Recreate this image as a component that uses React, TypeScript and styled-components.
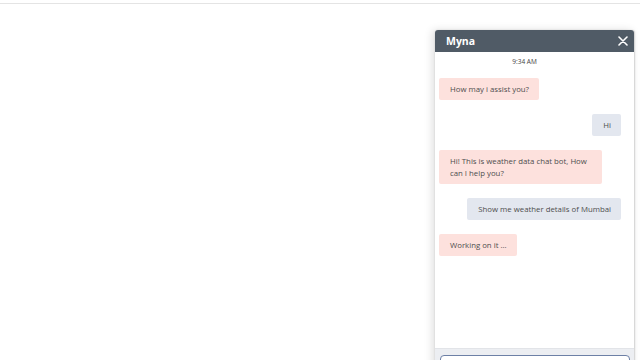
import React from "react";
import styled, { createGlobalStyle } from "styled-components";

const Global = createGlobalStyle`
  html, body { margin: 0; padding: 0; background: #fff; overflow: hidden; }
  body { font-family: "Open Sans", "Liberation Sans", sans-serif; width: 640px; height: 360px; }
`;

const Page = styled.div`
  width: 640px;
  height: 360px;
  display: flex;
  flex-direction: column;
`;

const TopBar = styled.div`
  height: 3px;
  border-bottom: 1px solid #e4e4e4;
  flex-shrink: 0;
`;

const Stage = styled.div`
  flex: 1;
  display: flex;
  justify-content: flex-end;
  padding: 26px 5px 0 0;
`;

const Panel = styled.div`
  width: 200px;
  height: 340px;
  box-sizing: border-box;
  flex-shrink: 0;
  display: flex;
  flex-direction: column;
  background: #fff;
  border-radius: 3px 3px 0 0;
  box-shadow: -3px 0 8px rgba(0, 0, 0, 0.12), 0 0 2px rgba(0, 0, 0, 0.12);
  border-right: 1px solid #d8d8d8;
`;

const Header = styled.div`
  height: 22px;
  background: #505b66;
  border-radius: 3px 3px 0 0;
  display: flex;
  align-items: center;
  justify-content: space-between;
  padding: 0 6px 0 11px;
  color: #fff;
  flex-shrink: 0;
`;

const Title = styled.span`
  font-size: 10.5px;
  font-weight: 700;
`;

const Close = styled.svg`
  width: 10px;
  height: 10px;
  display: block;
`;

const Messages = styled.div`
  height: 296px;
  flex-shrink: 0;
  display: flex;
  flex-direction: column;
  padding: 5px 13px 0 4px;
  box-sizing: border-box;
  gap: 14px;
`;

const Time = styled.div`
  font-size: 6.5px;
  line-height: 10px;
  color: #444;
  text-align: center;
  margin-bottom: -3px;
  padding-right: 11px;
`;

const Bubble = styled.div<{ $user?: boolean }>`
  align-self: ${(p) => (p.$user ? "flex-end" : "flex-start")};
  background: ${(p) => (p.$user ? "#e3e7ef" : "#fde1dd")};
  color: #4e4e4e;
  font-size: 7.8px;
  line-height: 12px;
  padding: 5px 10px 5px 11px;
  max-width: 142px;
  border-radius: 2px;
`;

const Footer = styled.div`
  flex: 1;
  background: #eceef2;
  border-top: 1px solid #e2e4e8;
  padding: 6px 4px 0 5px;
`;

const Input = styled.div`
  height: 30px;
  background: #fff;
  border: 1.5px solid #6d80a6;
  border-radius: 4px;
`;

export default function App() {
  return (
    <Page>
      <Global />
      <TopBar />
      <Stage>
        <Panel>
          <Header>
            <Title>Myna</Title>
            <Close viewBox="0 0 10 10">
              <path d="M1 1 L9 9 M9 1 L1 9" stroke="#fff" strokeWidth="1.6" strokeLinecap="round" />
            </Close>
          </Header>
          <Messages>
            <Time>9:34 AM</Time>
            <Bubble>How may i assist you?</Bubble>
            <Bubble $user>Hi</Bubble>
            <Bubble>Hi! This is weather data chat bot, How can I help you?</Bubble>
            <Bubble $user>Show me weather details of Mumbai</Bubble>
            <Bubble>Working on it ...</Bubble>
          </Messages>
          <Footer>
            <Input />
          </Footer>
        </Panel>
      </Stage>
    </Page>
  );
}
